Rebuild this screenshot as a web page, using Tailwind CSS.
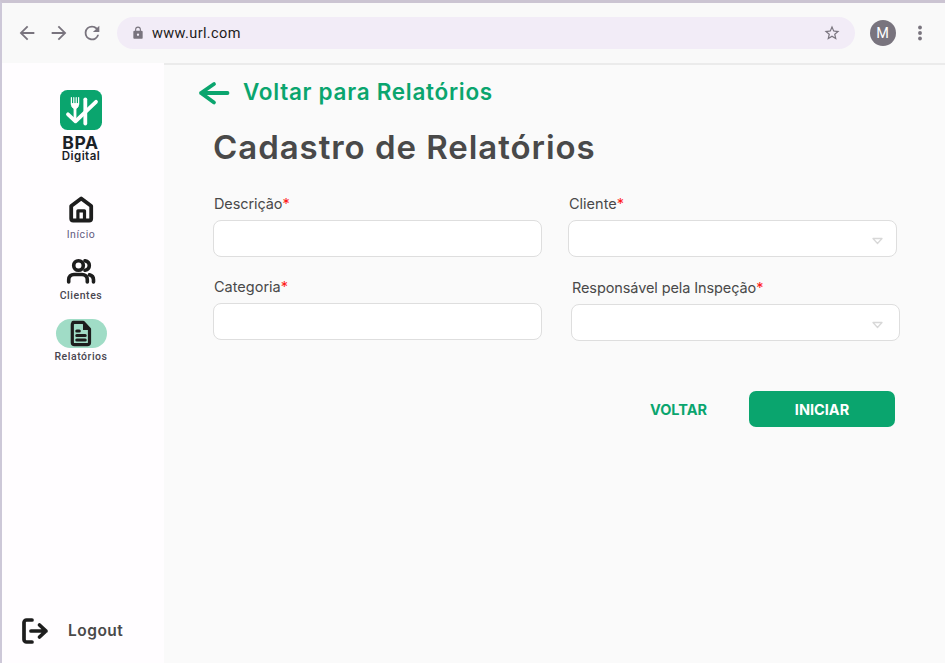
<!DOCTYPE html>
<html lang="pt-BR">
<head>
<meta charset="utf-8">
<title>Cadastro de Relatórios</title>
<script src="https://cdn.jsdelivr.net/npm/@tailwindcss/browser@4"></script>
</head>
<body class="w-[945px] h-[663px] overflow-hidden bg-[#fafafa] font-['Inter',sans-serif] text-[#49454f]">
<div class="flex flex-col w-full h-full border-t-[3px] border-l-2 border-t-[#cbc4d2] border-l-[#cdc8d8]">
  <header class="flex items-center h-[60px] shrink-0 bg-[#f9f9f9] text-[#79747e] font-['Roboto',sans-serif]">
    <svg class="ml-[14px] w-[22px] h-[22px]" viewBox="0 0 24 24" fill="currentColor"><path d="M20 11H7.83l5.59-5.59L12 4l-8 8 8 8 1.41-1.41L7.83 13H20z"/></svg>
    <svg class="ml-[10px] w-[22px] h-[22px]" viewBox="0 0 24 24" fill="currentColor"><path d="M12 4l-1.41 1.41L16.17 11H4v2h12.17l-5.58 5.59L12 20l8-8z"/></svg>
    <svg class="ml-[11px] w-[22px] h-[22px]" viewBox="0 0 24 24" fill="currentColor"><path d="M17.65 6.35A7.96 7.96 0 0 0 12 4a8 8 0 1 0 7.73 10h-2.08A6 6 0 1 1 12 6c1.66 0 3.14.69 4.22 1.78L13 11h7V4z"/></svg>
    <div class="ml-[14px] flex items-center w-[738px] h-[32px] rounded-full bg-[#f2ecf7]">
      <svg class="ml-[14px] w-[14px] h-[14px]" viewBox="0 0 24 24" fill="currentColor"><path d="M18 8h-1V6A5 5 0 0 0 7 6v2H6a2 2 0 0 0-2 2v10c0 1.100.9 2 2 2h12a2 2 0 0 0 2-2V10a2 2 0 0 0-2-2zm-6 9a2 2 0 1 1 0-4 2 2 0 0 1 0 4zM8.900 8V6a3.100 3.100 0 0 1 6.200 0v2z"/></svg>
      <span class="ml-[7px] pt-px text-[14.500px] leading-5 tracking-[0.400px] text-[#1d1b20]">www.url.com</span>
      <svg class="ml-auto mr-[14px] w-[18px] h-[18px]" viewBox="0 0 24 24" fill="currentColor"><path d="M22 9.240l-7.190-.620L12 2 9.190 8.630 2 9.240l5.460 4.730L5.820 21 12 17.270 18.180 21l-1.630-7.030zM12 15.400l-3.760 2.270 1-4.280-3.320-2.880 4.380-.380L12 6.100l1.710 4.040 4.380.380-3.320 2.880 1 4.280z"/></svg>
    </div>
    <div class="ml-[14.500px] flex items-center justify-center w-[26px] h-[26px] pt-[2px] rounded-full bg-[#79747e] text-[14.500px] leading-none text-white">M</div>
    <svg class="ml-[13.500px] w-[22px] h-[22px]" viewBox="0 0 24 24" fill="currentColor"><circle cx="12" cy="6" r="2.100"/><circle cx="12" cy="12" r="2.100"/><circle cx="12" cy="18" r="2.100"/></svg>
  </header>
  <div class="flex flex-1 min-h-0">
    <aside class="flex flex-col items-center w-[162px] shrink-0 bg-[#fffdff] pt-[27px]">
      <svg class="ml-[-4px] w-[42px] h-[40px]" viewBox="0 0 42 40">
        <rect width="42" height="40" rx="7.500" fill="#0aa56e"/>
        <g fill="none" stroke="#fff" stroke-linecap="round" stroke-linejoin="round">
          <path d="M11.400 7.500v7M13.800 7.500v7M16.200 7.500v7M18.600 7.500v7" stroke-width="1.200"/>
          <path d="M11.400 14c0 3 1.400 4.500 3.600 4.500s3.600-1.500 3.600-4.500z" fill="#fff" stroke-width="1"/>
          <path d="M15 17v13" stroke-width="2.800"/>
          <path d="M8 24.300L15.500 31.300 36 11.800" stroke-width="3.800"/>
          <path d="M25.300 9.300V33.500" stroke-width="3.800"/>
        </g>
      </svg>
      <div class="mt-[5px] ml-[-5px] h-[15px] text-[17.500px] leading-[15px] font-bold tracking-[0.700px] text-[#1b2228]">BPA</div>
      <div class="ml-[-4px] h-[15px] text-[11.500px] leading-[13px] font-semibold tracking-[0.450px] text-[#1b2228]">Digital</div>
      <nav class="flex flex-col items-center mt-[30px] ml-[-4px] font-['Roboto',sans-serif] text-[10.500px] leading-[14px] font-medium tracking-[0.550px]">
        <a class="flex flex-col items-center h-[61px]">
          <svg class="w-[29px] h-[29px]" viewBox="0 0 29 29" fill="none" stroke="#1d1d1d" stroke-width="3.800" stroke-linejoin="round"><path d="M4.200 11L14.200 3.500l10 7.500v12.500a2 2 0 0 1-2 2h-16a2 2 0 0 1-2-2z"/><path d="M10.900 25v-9.200h6.600V25" stroke-width="3.200"/></svg>
          <span class="mt-[4px] text-[#625b80] font-normal">Início</span>
        </a>
        <a class="flex flex-col items-center h-[61px] pt-px">
          <svg class="w-[30px] h-[29px]" viewBox="0 0 30 29" fill="none" stroke="#1d1d1d" stroke-width="3.600" stroke-linecap="round"><circle cx="12.500" cy="8.500" r="4.800"/><path d="M2.700 25v-2.200c0-3.300 2.200-5.300 5.300-5.300h8c3.100 0 5.300 2 5.300 5.300V25M19 3.700c2.600.500 4.300 2.400 4.300 4.800s-1.700 4.300-4.300 4.800M23.500 17.800c2.500.600 4 2.500 4 5V25"/></svg>
          <span class="mt-[3px]">Clientes</span>
        </a>
        <a class="flex flex-col items-center pt-[2px]">
          <span class="flex items-center justify-center w-[51px] h-[29px] rounded-full bg-[#a0dcc6]">
            <svg class="w-[22px] h-[27px]" viewBox="0 0 22 27"><path d="M3 2.300h10.300L19.500 9v13.500a2.200 2.200 0 0 1-2.200 2.200H4.500a2.200 2.200 0 0 1-2.200-2.200V4.500A2.200 2.200 0 0 1 4.500 2.300z" fill="none" stroke="#1d1d1d" stroke-width="3.200" stroke-linejoin="round"/><path d="M13 2v8h7" fill="#1d1d1d"/><path d="M6.800 11h2.500M6.800 15.500h8.400M6.800 20h8.400" stroke="#1d1d1d" stroke-width="3.100" stroke-linecap="round"/></svg>
          </span>
          <span class="mt-[2px]">Relatórios</span>
        </a>
      </nav>
      <a class="mt-auto mb-[18px] self-start ml-[19px] flex items-center">
        <svg class="w-[28px] h-[28px]" viewBox="0 0 28 28" fill="none" stroke="#1d1d1d" stroke-width="3.700" stroke-linecap="round" stroke-linejoin="round"><path d="M11 3H5.500A2.500 2.500 0 0 0 3 5.500v17A2.500 2.500 0 0 0 5.500 25H11M10 14h15M18.500 8l6.500 6-6.500 6"/></svg>
        <span class="ml-[19px] text-[15.500px] leading-6 font-semibold tracking-[0.500px] text-[#494949]">Logout</span>
      </a>
    </aside>
    <main class="flex-1 border-t-2 border-[#ebebeb] bg-[#fafafa]">
      <a class="flex items-center h-[55px] pl-[33px] text-[#0aa56e]">
        <svg class="w-[34px] h-[26px]" viewBox="0 0 34 26" fill="none" stroke="currentColor" stroke-width="3.800" stroke-linecap="round" stroke-linejoin="round"><path d="M30.500 13H4M17 4L4 13l13 9.500"/></svg>
        <span class="ml-[12px] pb-[2px] text-[22.500px] leading-8 font-semibold tracking-[0.720px] whitespace-nowrap">Voltar para Relatórios</span>
      </a>
      <h1 class="pl-[49px] h-[54px] text-[33px] leading-[54px] font-semibold tracking-[0.950px] text-[#494949] whitespace-nowrap">Cadastro de Relatórios</h1>
      <form class="pl-[49px] pt-[20px] flex gap-[26px] text-[14.500px] leading-[20px] text-[#494949]">
        <div class="flex flex-col w-[329px]">
          <label class="h-[26px] pl-[1px] tracking-[-0.100px]">Descrição<span class="text-[#ff1a1a]">*</span></label>
          <div class="h-[37px] mb-[20px] rounded-[8px] border border-[#dedede] bg-white"></div>
          <label class="h-[26px] pl-[1px]">Categoria<span class="text-[#ff1a1a]">*</span></label>
          <div class="h-[37px] rounded-[8px] border border-[#dedede] bg-white"></div>
        </div>
        <div class="flex flex-col w-[332px]">
          <label class="h-[26px] pl-[1px]">Cliente<span class="text-[#ff1a1a]">*</span></label>
          <div class="flex items-center w-[329px] h-[37px] mb-[21px] rounded-[8px] border border-[#dedede] bg-white">
            <svg class="ml-auto mr-[13px] mt-[4px] w-[11px] h-[8px]" viewBox="0 0 11 8" fill="none" stroke="#d8d8d8" stroke-width="1.300" stroke-linejoin="round"><path d="M1 1.500h9L5.500 6.500z"/></svg>
          </div>
          <label class="h-[26px] pl-[4px] tracking-[-0.100px]">Responsável pela Inspeção<span class="text-[#ff1a1a]">*</span></label>
          <div class="flex items-center ml-[3px] w-[329px] h-[37px] rounded-[8px] border border-[#dedede] bg-white">
            <svg class="ml-auto mr-[16px] mt-[4px] w-[11px] h-[8px]" viewBox="0 0 11 8" fill="none" stroke="#d8d8d8" stroke-width="1.300" stroke-linejoin="round"><path d="M1 1.500h9L5.500 6.500z"/></svg>
          </div>
        </div>
      </form>
      <div class="flex items-center justify-end mt-[50px] pr-[50px] text-[14.500px] leading-none font-bold">
        <button class="mr-[42px] pt-[2px] text-[#0aa56e]">VOLTAR</button>
        <button class="w-[146px] h-[36px] pt-[2px] rounded-[7px] bg-[#0aa56e] text-white">INICIAR</button>
      </div>
    </main>
  </div>
</div>
</body>
</html>
